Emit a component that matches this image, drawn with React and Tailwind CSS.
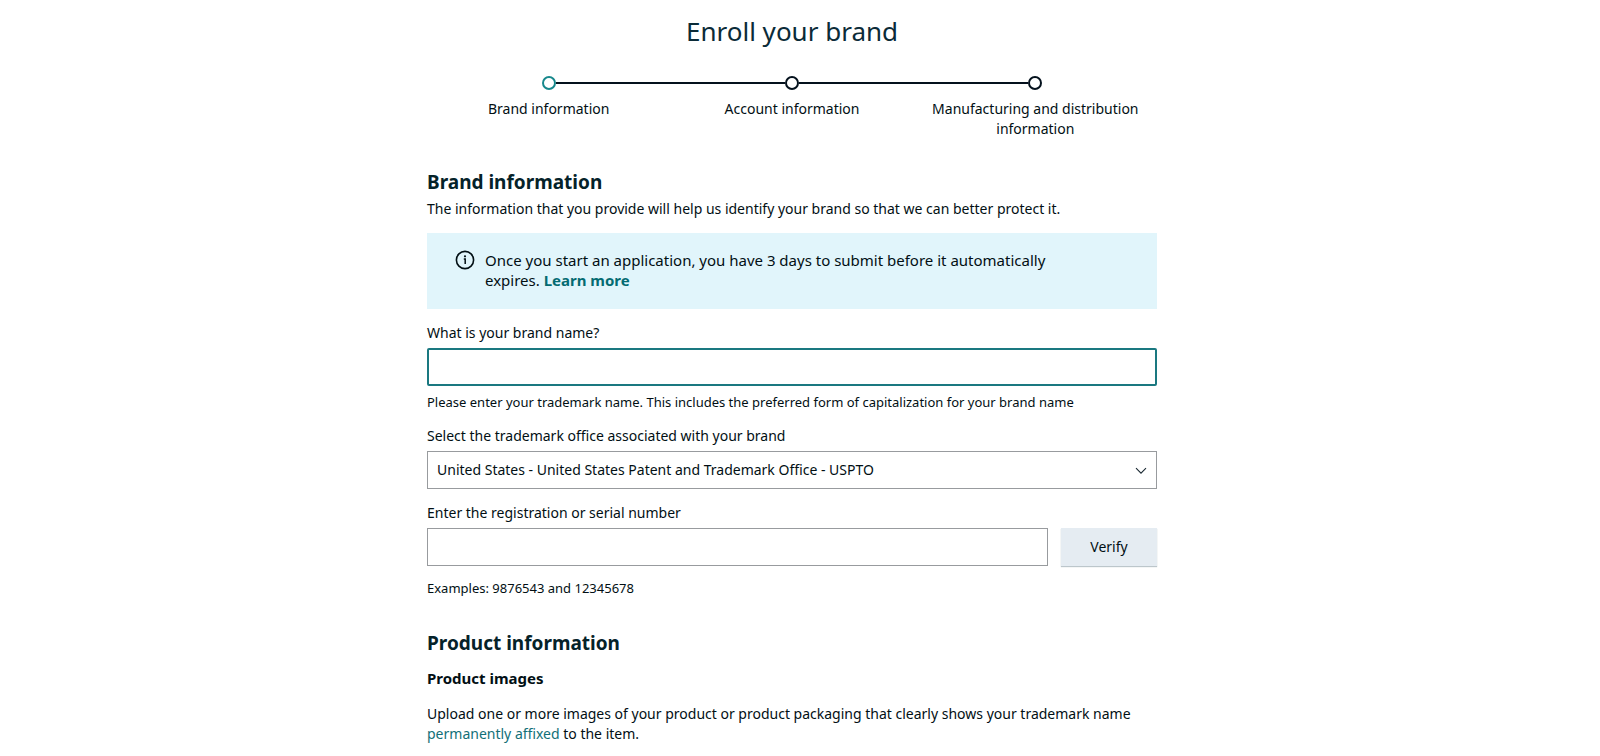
import React, { useState } from 'react';

const steps = [
  { label: 'Brand information', active: true },
  { label: 'Account information' },
  { label: 'Manufacturing and distribution information' }
];

const Stepper = () => (
  <ol className="mt-[25px] flex">
    {steps.map((step, i) => (
      <li key={step.label} className="flex flex-1 flex-col items-center">
        <div className="flex w-full items-center">
          <div className={`h-0.5 flex-1 ${i > 0 ? 'bg-[#04111d]' : ''}`} />
          <div className={`h-[14px] w-[14px] rounded-full border-2 bg-white ${step.active ? 'border-[#17888c]' : 'border-[#04111d]'}`} />
          <div className={`h-0.5 flex-1 ${i < steps.length - 1 ? 'bg-[#04111d]' : ''}`} />
        </div>
        <span className="mt-[9px] px-3 text-center">{step.label}</span>
      </li>
    ))}
  </ol>
);

const InfoIcon = () => (
  <svg width="20" height="20" viewBox="0 0 20 20" fill="none" className="shrink-0" aria-hidden="true">
    <circle cx="10" cy="10" r="8.6" stroke="#020f14" strokeWidth="1.6" />
    <circle cx="10" cy="6.3" r="1.1" fill="#020f14" />
    <path d="M8.8 9H10.2V14" stroke="#020f14" strokeWidth="1.5" />
  </svg>
);

const Chevron = () => (
  <svg width="12" height="8" viewBox="0 0 12 8" fill="none" className="pointer-events-none absolute right-[10px] top-4" aria-hidden="true">
    <path d="M1 1.2L6 6.2L11 1.2" stroke="#1b2a33" strokeWidth="1.1" />
  </svg>
);

const App = () => {
  const [brandName, setBrandName] = useState('');
  const [office, setOffice] = useState('uspto');
  const [serial, setSerial] = useState('');

  return (
    <div className="min-h-screen overflow-x-hidden bg-white pr-4 font-['Noto_Sans',sans-serif] text-sm leading-5 text-[#020f14]">
      <main className="mx-auto max-w-[730px] pt-[11px]">
        <h1 className="text-center text-[26px] leading-10 text-[#0b2b38]">Enroll your brand</h1>
        <Stepper />

        <form onSubmit={(e) => e.preventDefault()}>
          <h2 className="mt-[29px] text-[19px] leading-7 font-bold text-[#052229]">Brand information</h2>
          <p className="mt-[3px]">The information that you provide will help us identify your brand so that we can better protect it.</p>

          <div className="mt-[14px] flex gap-[10px] bg-[#e1f5fb] pt-[17px] pr-20 pb-[19px] pl-7 text-[15px] leading-5">
            <InfoIcon />
            <p>
              Once you start an application, you have 3 days to submit before it automatically expires.{' '}
              <a href="#learn-more" className="font-bold text-[#046b72]">Learn more</a>
            </p>
          </div>

          <label htmlFor="brand-name" className="mt-[14px] block">What is your brand name?</label>
          <input
            id="brand-name"
            type="text"
            value={brandName}
            onChange={(e) => setBrandName(e.target.value)}
            className="mt-[5px] block h-[38px] w-full rounded-[2px] border-2 border-[#1a7880] px-[9px] outline-none"
          />
          <p className="mt-[6px] text-[13px] leading-5">Please enter your trademark name. This includes the preferred form of capitalization for your brand name</p>

          <label htmlFor="office" className="mt-[14px] block">Select the trademark office associated with your brand</label>
          <div className="relative mt-[5px]">
            <select
              id="office"
              value={office}
              onChange={(e) => setOffice(e.target.value)}
              className="block h-[38px] w-full appearance-none border border-[#989b9e] bg-white px-[9px]"
            >
              <option value="uspto">United States - United States Patent and Trademark Office - USPTO</option>
            </select>
            <Chevron />
          </div>

          <label htmlFor="serial" className="mt-[14px] block">Enter the registration or serial number</label>
          <div className="mt-[5px] flex gap-[13px]">
            <input
              id="serial"
              type="text"
              value={serial}
              onChange={(e) => setSerial(e.target.value)}
              className="h-[38px] min-w-0 flex-1 border border-[#989b9e] px-[9px]"
            />
            <button type="submit" className="h-[38px] w-24 bg-[#e5ecf2] shadow-[0_1px_1px_#bcc6cb]">Verify</button>
          </div>
          <p className="mt-3 text-[13px] leading-5">Examples: 9876543 and 12345678</p>

          <h2 className="mt-[31px] text-[19px] leading-7 font-bold text-[#052229]">Product information</h2>
          <h3 className="mt-[11px] text-[15px] leading-5 font-bold">Product images</h3>
          <p className="mt-4">
            Upload one or more images of your product or product packaging that clearly shows your trademark name{' '}
            <a href="#affixed" className="text-[#127078]">permanently affixed</a> to the item.
          </p>
        </form>
      </main>
    </div>
  );
};

export default App;
